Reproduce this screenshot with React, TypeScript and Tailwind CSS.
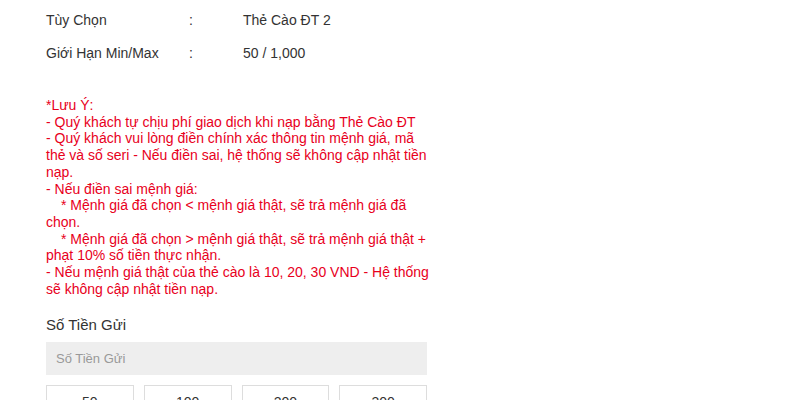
import React from 'react';

const rows = [
  { label: 'Tùy Chọn', value: 'Thẻ Cào ĐT 2' },
  { label: 'Giới Hạn Min/Max', value: '50 / 1,000' },
];

const amounts = ['50', '100', '200', '300'];

export default function App() {
  return (
    <div className="w-[800px] h-[400px] overflow-hidden bg-white font-['Liberation_Sans',Arial,sans-serif]">
      <div className="ml-[46px] w-[381px] pt-[11px]">
        {rows.map((r) => (
          <div key={r.label} className="flex h-[33px] items-start text-[14px] leading-[18px] text-[#333]">
            <span className="w-[143px]">{r.label}</span>
            <span className="w-[54px]">:</span>
            <span>{r.value}</span>
          </div>
        ))}

        <div className="mt-[20px] w-[390px] text-[14px] leading-[16.7px] text-[#e8001c]">
          <div>*Lưu Ý:</div>
          <div>- Quý khách tự chịu phí giao dịch khi nạp bằng Thẻ Cào ĐT</div>
          <div>
            - Quý khách vui lòng điền chính xác thông tin mệnh giá, mã thẻ và số seri - Nếu điền sai, hệ thống sẽ không cập nhật tiền nạp.
          </div>
          <div>- Nếu điền sai mệnh giá:</div>
          <div className="indent-[15px]">* Mệnh giá đã chọn &lt; mệnh giá thật, sẽ trả mệnh giá đã chọn.</div>
          <div className="indent-[15px]">* Mệnh giá đã chọn &gt; mệnh giá thật, sẽ trả mệnh giá thật + phạt 10% số tiền thực nhận.</div>
          <div>- Nếu mệnh giá thật của thẻ cào là 10, 20, 30 VND - Hệ thống sẽ không cập nhật tiền nạp.</div>
        </div>

        <div className="mt-[19px] text-[15px] leading-[18px] text-[#333]">Số Tiền Gửi</div>
        <div className="mt-[8px] flex h-[33px] items-center bg-[#eeeeee] px-[10px] text-[13px] text-[#999]">
          Số Tiền Gửi
        </div>
        <div className="mt-[10px] grid grid-cols-4 gap-[10px]">
          {amounts.map((a) => (
            <div
              key={a}
              className="flex h-[34px] items-center justify-center border border-[#dddddd] bg-white text-[14px] text-[#333]"
            >
              {a}
            </div>
          ))}
        </div>
      </div>
    </div>
  );
}
